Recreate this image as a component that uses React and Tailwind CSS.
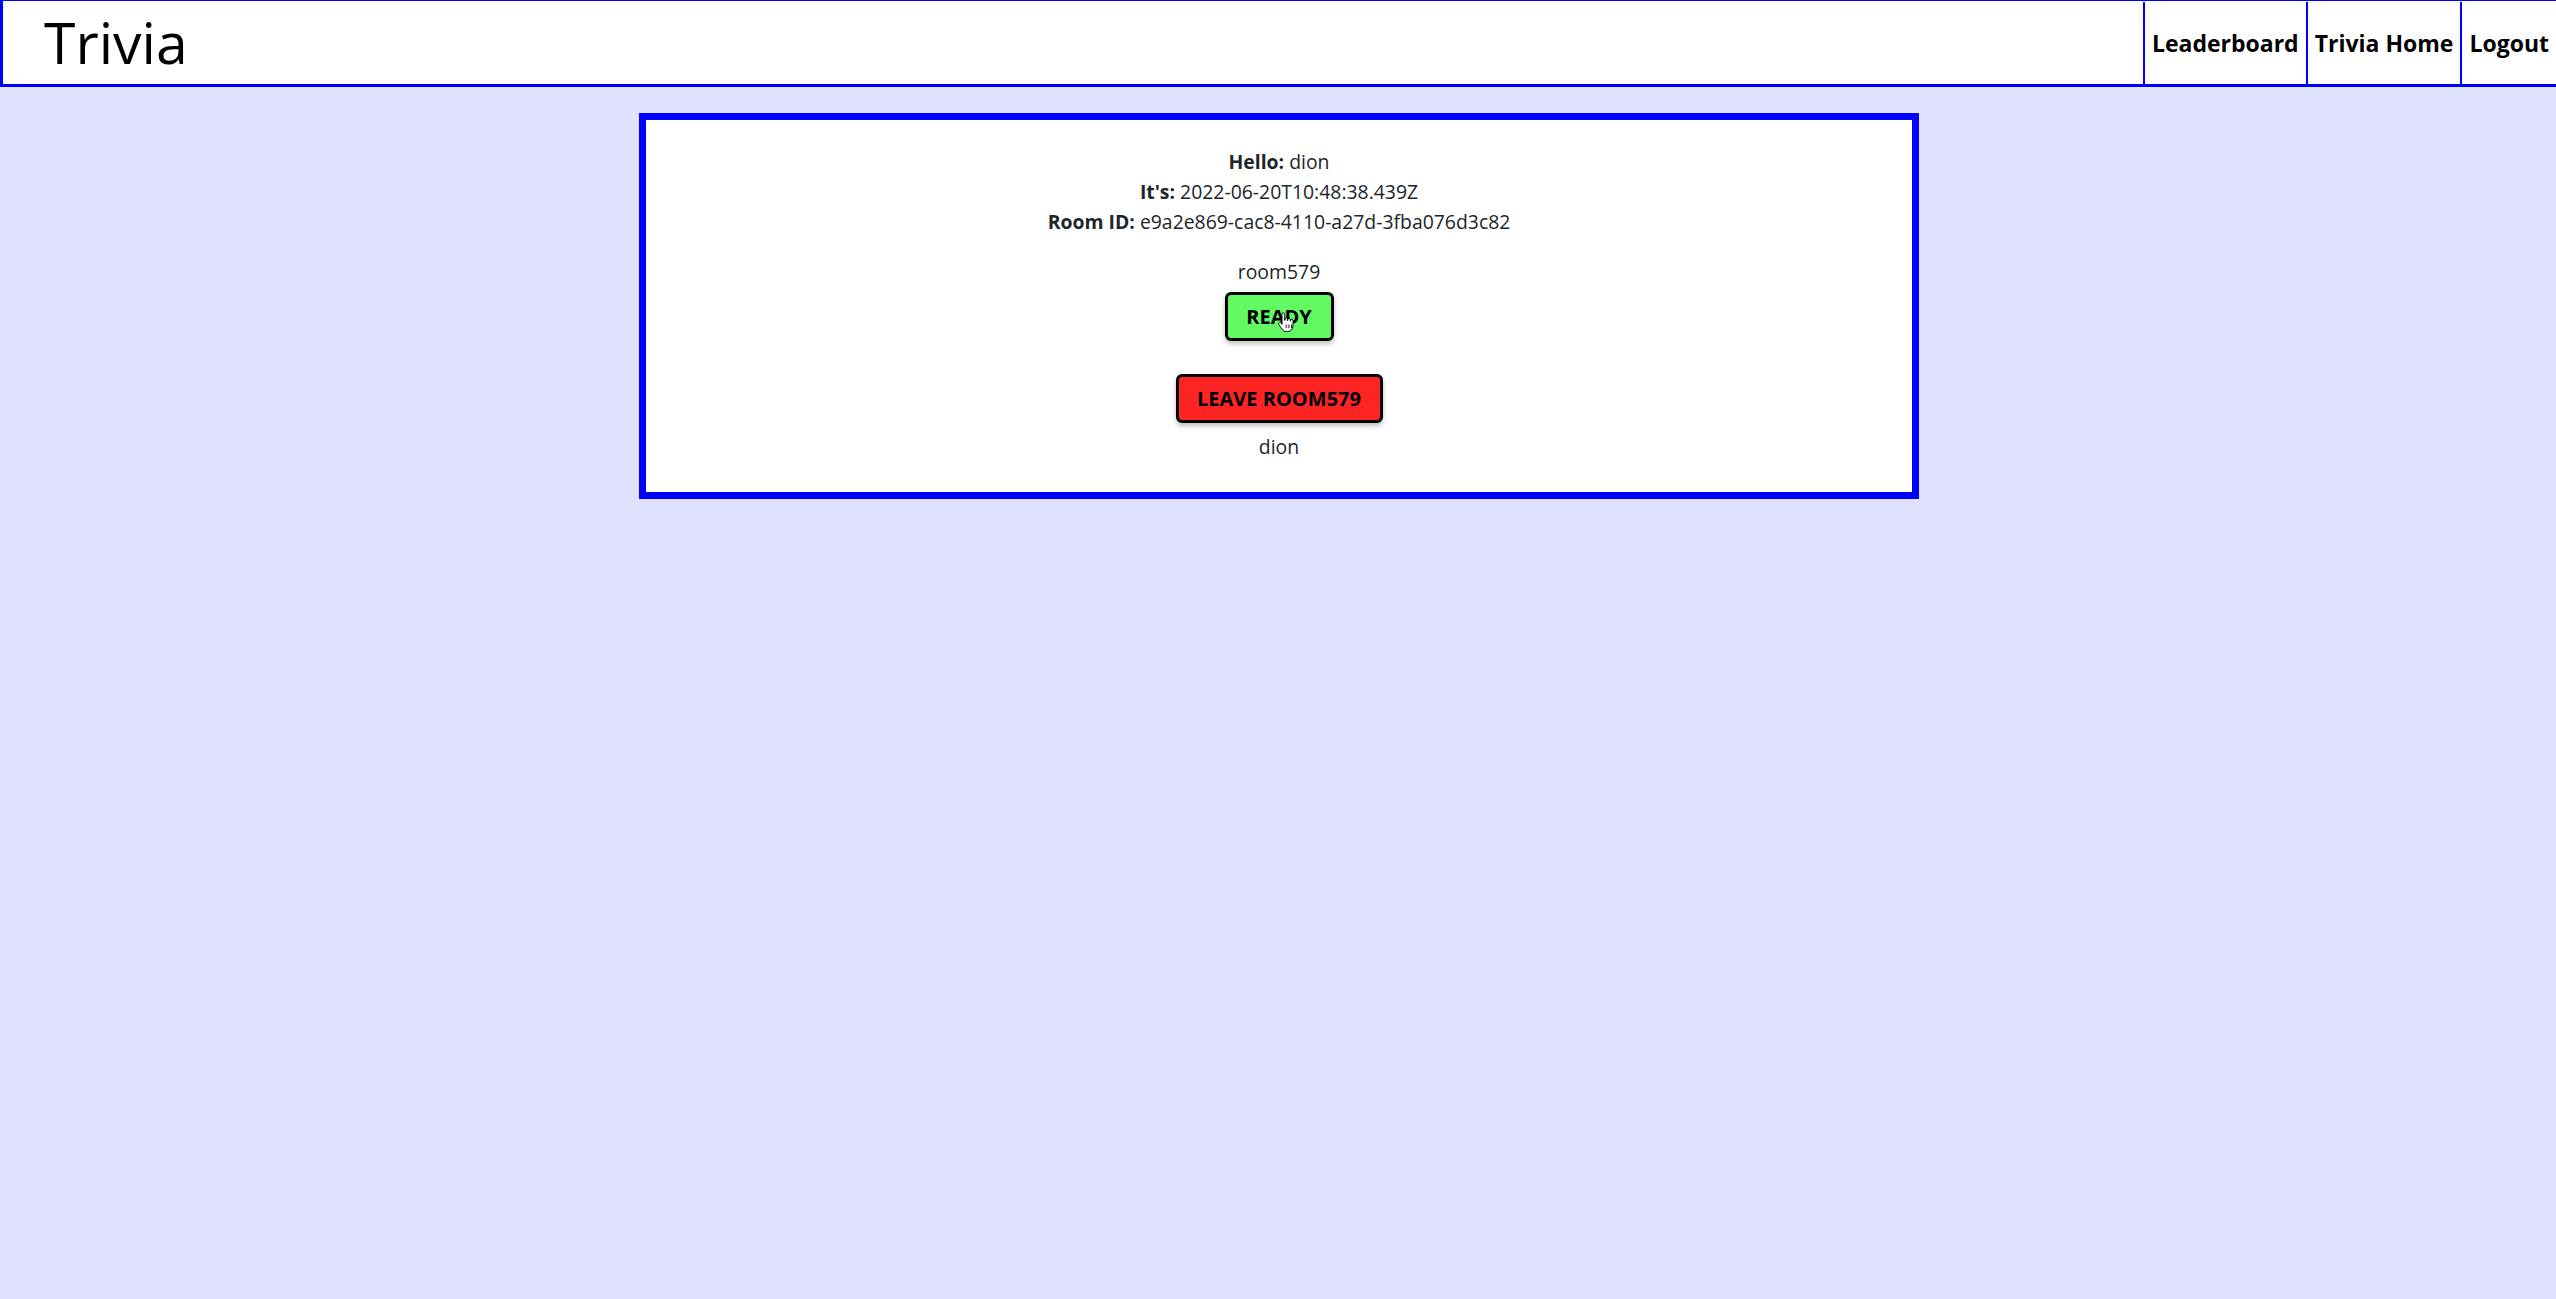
import React from "react";

const font = { fontFamily: '"Open Sans", "Noto Sans", "Liberation Sans", sans-serif' };

function Hand() {
  return (
    <svg width="18" height="22" viewBox="0 0 18 22" className="absolute left-[49px] top-[16px]">
      <path d="M5 12V3.2C5 2.3 5.6 1.7 6.4 1.7S7.8 2.3 7.8 3.2V9.5V8.2c0-.8.6-1.4 1.4-1.4s1.4.6 1.4 1.4v1.5-.9c0-.8.6-1.4 1.4-1.4s1.4.6 1.4 1.4v1.4-.6c0-.8.6-1.3 1.3-1.3s1.3.6 1.3 1.3V15c0 3.2-2.4 5.6-5.6 5.6H9.5c-1.9 0-3.3-.8-4.4-2.3L1.9 13.8c-.5-.7-.3-1.6.4-2s1.5-.2 2 .4L5 13.4Z" fill="#fff" stroke="#000" strokeWidth="1" strokeLinejoin="round" />
      <path d="M9.2 13.5v3.5M11.9 13.5v3.5M14.5 13.5v3.5" stroke="#000" strokeWidth="0.9" />
    </svg>
  );
}

export default function App() {
  return (
    <div className="min-h-screen bg-[#e0e0ff]" style={font}>
      <header className="flex h-[87px] items-stretch border-t border-l-[3px] border-b-[3px] border-[#0000ff] bg-white">
        <div className="flex items-center pl-[41px] text-[57px] font-medium leading-none text-black">Trivia</div>
        <nav className="ml-auto flex items-stretch pt-[1px]">
          <a className="flex items-center border-l-[2px] border-[#0000ff] px-[7px] text-[23px] font-bold text-black">Leaderboard</a>
          <a className="flex items-center border-l-[2px] border-[#0000ff] px-[7px] text-[23px] font-bold text-black">Trivia Home</a>
          <a className="flex items-center border-l-[2px] border-[#0000ff] px-[7px] text-[23px] font-bold text-black">Logout</a>
        </nav>
      </header>
      <div className="flex justify-center pt-[26px] pl-[2px]">
        <div className="flex w-[1280px] flex-col items-center border-[7px] border-[#0000ff] bg-white pt-[27px] pb-[30px] text-[19.4px] leading-[30px] text-[#212529]">
          <div><span className="font-bold">Hello:</span> dion</div>
          <div><span className="font-bold">It's:</span> 2022-06-20T10:48:38.439Z</div>
          <div><span className="font-bold">Room ID:</span> e9a2e869-cac8-4110-a27d-3fba076d3c82</div>
          <div className="mt-[20px]">room579</div>
          <button className="relative mt-[5px] flex h-[49px] w-[109px] items-center justify-center rounded-[6px] border-[3px] border-black bg-[#62f962] text-[20px] font-bold text-black shadow-[0_3px_5px_rgba(0,0,0,0.25)]">
            READY
            <Hand />
          </button>
          <button className="mt-[33px] flex h-[49px] w-[207px] items-center justify-center rounded-[6px] border-[3px] border-black bg-[#ff2424] text-[20px] font-bold text-black shadow-[0_3px_5px_rgba(0,0,0,0.25)]">
            LEAVE ROOM579
          </button>
          <div className="mt-[9px]">dion</div>
        </div>
      </div>
    </div>
  );
}
